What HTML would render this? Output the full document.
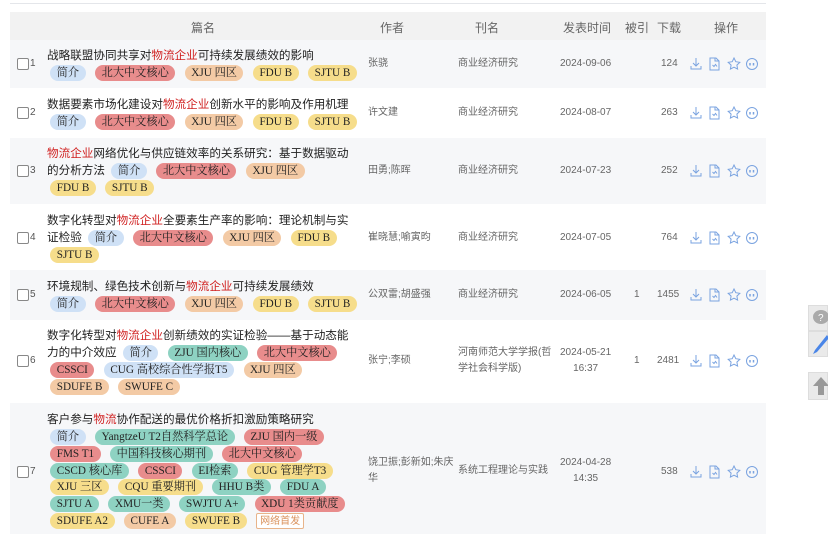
<!DOCTYPE html>
<html><head><meta charset="utf-8"><style>
*{margin:0;padding:0;box-sizing:border-box}
body{width:828px;height:534px;overflow:hidden;background:#fff;font-family:"Liberation Sans","Noto Sans CJK SC",sans-serif;color:#222;position:relative}
.top{position:absolute;left:10px;top:0;width:756px;height:4px;border-bottom:1px solid #e4e6ea}
.hd{position:absolute;left:10px;top:12px;width:756px;height:28px;background:#f2f2f2;font-size:12px;color:#666}
.hd span{position:absolute;top:7px}
.row{position:absolute;left:10px;width:756px}
.g{background:#f6f7f9}
.cb{position:absolute;left:7px;width:12px;height:12px;border:1px solid #888;border-radius:2px;background:#fff}
.idx{position:absolute;left:20px;font-size:10px;color:#555}
.t{position:absolute;left:37px;font-size:11.6px;line-height:16.7px;white-space:nowrap}
.t div{height:16.7px}
.r{color:#d02020}
.tag{display:inline-block;height:16px;line-height:16px;border-radius:8px;padding:0 6.5px;margin-right:9.5px;font-family:"Liberation Serif","Noto Serif CJK SC",serif;font-size:11.2px;color:#222;vertical-align:top;margin-top:0.5px}
.b{background:#cfe1f6}.rd{background:#e88c8c}.o{background:#f3caa5}.y{background:#f6dd8b}.tl{background:#8ed2c2}
.nf{border:1px solid #e8b48a;background:#fff;color:#d9905a;font-size:10px;border-radius:2px;padding:0 3px;font-family:"Liberation Sans","Noto Sans CJK SC",sans-serif}
.c{position:absolute;font-size:10px;color:#666;line-height:16px}
.ic{position:absolute;left:680px;width:70px;height:14px}
.side{position:absolute;left:808px;width:20px;background:#eaeaea;border:1px solid #ddd}
</style></head><body>
<div class="top"></div>
<div class="hd"><span style="left:181px">篇名</span><span style="left:370px">作者</span><span style="left:465px">刊名</span><span style="left:553px">发表时间</span><span style="left:615px">被引</span><span style="left:647px">下载</span><span style="left:704px">操作</span></div>

<svg width="0" height="0" style="position:absolute"><defs>
<g id="ops" fill="none" stroke="#7aa3e0" stroke-width="1">
<path d="M6 1v8M3 6l3 3 3-3M1 9v3h10V9"/>
<path d="M20 1h6l3 3v9h-9z M25 1v3h4 M22.5 8l1.5 1.5 1.5-2 1.5 2"/>
<path d="M44 1l1.8 3.7 4 .6-2.9 2.8.7 4-3.6-1.9-3.6 1.9.7-4-2.9-2.8 4-.6z"/>
<circle cx="62" cy="7" r="5.5"/><path d="M60 6v2.5M63.5 6v2.5" stroke-width="1.5"/>
</g></defs></svg>

<div class="row g" style="top:40px;height:48px">
<div class="cb" style="top:18px"></div><div class="idx" style="top:18px">1</div>
<div class="t" style="top:8px"><div>战略联盟协同共享对<span class="r">物流企业</span>可持续发展绩效的影响</div><div>&nbsp;<span class="tag b">简介</span><span class="tag rd">北大中文核心</span><span class="tag o">XJU 四区</span><span class="tag y">FDU B</span><span class="tag y">SJTU B</span></div></div>
<div class="c" style="left:358px;top:16px">张骁</div><div class="c" style="left:448px;top:16px">商业经济研究</div><div class="c" style="left:550px;top:16px">2024-09-06</div><div class="c" style="left:651px;top:16px">124</div>
<svg class="ic" style="top:17px"><use href="#ops"/></svg></div>

<div class="row" style="top:88px;height:50px">
<div class="cb" style="top:19px"></div><div class="idx" style="top:19px">2</div>
<div class="t" style="top:9px"><div>数据要素市场化建设对<span class="r">物流企业</span>创新水平的影响及作用机理</div><div>&nbsp;<span class="tag b">简介</span><span class="tag rd">北大中文核心</span><span class="tag o">XJU 四区</span><span class="tag y">FDU B</span><span class="tag y">SJTU B</span></div></div>
<div class="c" style="left:358px;top:17px">许文建</div><div class="c" style="left:448px;top:17px">商业经济研究</div><div class="c" style="left:550px;top:17px">2024-08-07</div><div class="c" style="left:651px;top:17px">263</div>
<svg class="ic" style="top:18px"><use href="#ops"/></svg></div>

<div class="row g" style="top:138px;height:66px">
<div class="cb" style="top:27px"></div><div class="idx" style="top:27px">3</div>
<div class="t" style="top:8px"><div><span class="r">物流企业</span>网络优化与供应链效率的关系研究：基于数据驱动</div><div>的分析方法 &nbsp;<span class="tag b">简介</span><span class="tag rd">北大中文核心</span><span class="tag o">XJU 四区</span></div><div>&nbsp;<span class="tag y">FDU B</span><span class="tag y">SJTU B</span></div></div>
<div class="c" style="left:358px;top:25px">田勇;陈晖</div><div class="c" style="left:448px;top:25px">商业经济研究</div><div class="c" style="left:550px;top:25px">2024-07-23</div><div class="c" style="left:651px;top:25px">252</div>
<svg class="ic" style="top:26px"><use href="#ops"/></svg></div>

<div class="row" style="top:204px;height:66px">
<div class="cb" style="top:28px"></div><div class="idx" style="top:28px">4</div>
<div class="t" style="top:9px"><div>数字化转型对<span class="r">物流企业</span>全要素生产率的影响：理论机制与实</div><div>证检验 &nbsp;<span class="tag b">简介</span><span class="tag rd">北大中文核心</span><span class="tag o">XJU 四区</span><span class="tag y">FDU B</span></div><div>&nbsp;<span class="tag y">SJTU B</span></div></div>
<div class="c" style="left:358px;top:26px">崔晓慧;喻寅昀</div><div class="c" style="left:448px;top:26px">商业经济研究</div><div class="c" style="left:550px;top:26px">2024-07-05</div><div class="c" style="left:651px;top:26px">764</div>
<svg class="ic" style="top:27px"><use href="#ops"/></svg></div>

<div class="row g" style="top:270px;height:50px">
<div class="cb" style="top:19px"></div><div class="idx" style="top:19px">5</div>
<div class="t" style="top:9px"><div>环境规制、绿色技术创新与<span class="r">物流企业</span>可持续发展绩效</div><div>&nbsp;<span class="tag b">简介</span><span class="tag rd">北大中文核心</span><span class="tag o">XJU 四区</span><span class="tag y">FDU B</span><span class="tag y">SJTU B</span></div></div>
<div class="c" style="left:358px;top:17px">公双雷;胡盛强</div><div class="c" style="left:448px;top:17px">商业经济研究</div><div class="c" style="left:550px;top:17px">2024-06-05</div><div class="c" style="left:624px;top:17px">1</div><div class="c" style="left:647px;top:17px">1455</div>
<svg class="ic" style="top:18px"><use href="#ops"/></svg></div>

<div class="row" style="top:320px;height:83px">
<div class="cb" style="top:35px"></div><div class="idx" style="top:35px">6</div>
<div class="t" style="top:8px"><div>数字化转型对<span class="r">物流企业</span>创新绩效的实证检验——基于动态能</div><div>力的中介效应 &nbsp;<span class="tag b">简介</span><span class="tag tl">ZJU 国内核心</span><span class="tag rd">北大中文核心</span></div><div>&nbsp;<span class="tag rd">CSSCI</span><span class="tag b">CUG 高校综合性学报T5</span><span class="tag o">XJU 四区</span></div><div>&nbsp;<span class="tag o">SDUFE B</span><span class="tag o">SWUFE C</span></div></div>
<div class="c" style="left:358px;top:33px">张宁;李硕</div><div class="c" style="left:448px;top:25px">河南师范大学学报(哲<br>学社会科学版)</div><div class="c" style="left:550px;top:25px;text-align:center">2024-05-21<br>16:37</div><div class="c" style="left:624px;top:33px">1</div><div class="c" style="left:647px;top:33px">2481</div>
<svg class="ic" style="top:34px"><use href="#ops"/></svg></div>

<div class="row g" style="top:403px;height:131px">
<div class="cb" style="top:63px"></div><div class="idx" style="top:63px">7</div>
<div class="t" style="top:9px"><div>客户参与<span class="r">物流</span>协作配送的最优价格折扣激励策略研究</div>
<div>&nbsp;<span class="tag b">简介</span><span class="tag tl">YangtzeU T2自然科学总论</span><span class="tag rd">ZJU 国内一级</span></div>
<div>&nbsp;<span class="tag rd">FMS T1</span><span class="tag tl">中国科技核心期刊</span><span class="tag rd">北大中文核心</span></div>
<div>&nbsp;<span class="tag tl">CSCD 核心库</span><span class="tag rd">CSSCI</span><span class="tag tl">EI检索</span><span class="tag y">CUG 管理学T3</span></div>
<div>&nbsp;<span class="tag y">XJU 三区</span><span class="tag y">CQU 重要期刊</span><span class="tag tl">HHU B类</span><span class="tag tl">FDU A</span></div>
<div>&nbsp;<span class="tag tl">SJTU A</span><span class="tag tl">XMU一类</span><span class="tag tl">SWJTU A+</span><span class="tag rd">XDU 1类贡献度</span></div>
<div>&nbsp;<span class="tag y">SDUFE A2</span><span class="tag o">CUFE A</span><span class="tag y">SWUFE B</span><span class="tag nf">网络首发</span></div></div>
<div class="c" style="left:358px;top:52px">饶卫振;彭新如;朱庆<br>华</div><div class="c" style="left:448px;top:60px">系统工程理论与实践</div><div class="c" style="left:550px;top:52px;text-align:center">2024-04-28<br>14:35</div><div class="c" style="left:651px;top:61px">538</div>
<svg class="ic" style="top:62px"><use href="#ops"/></svg></div>

<div class="side" style="top:305px;height:26px"><svg width="20" height="24"><ellipse cx="12" cy="11" rx="8" ry="7" fill="#aaa"/><text x="9" y="15" font-size="10" fill="#fff" font-family="Liberation Sans">?</text></svg></div>
<div class="side" style="top:331px;height:26px"><svg width="20" height="24"><path d="M18 3L6 18l-2 4 4-2L20 6z" fill="#4a86e8"/></svg></div>
<div class="side" style="top:372px;height:28px"><svg width="20" height="26"><path d="M12 4l-8 9h5v9h6v-9h5z" fill="#999"/></svg></div>
</body></html>
